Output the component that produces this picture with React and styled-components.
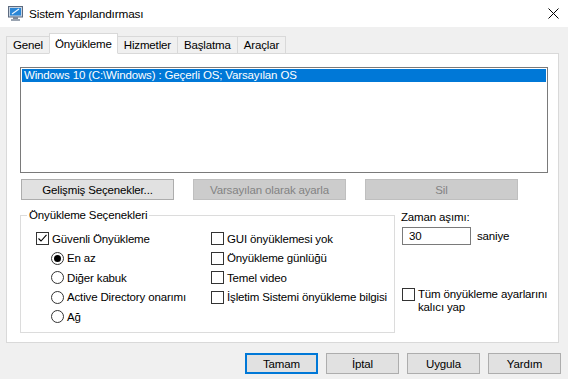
import React from 'react';
import styled, { createGlobalStyle } from 'styled-components';

const Global = createGlobalStyle`
  html, body { margin: 0; padding: 0; background: #f0f0f0; }
  body {
    font-family: "Segoe UI", "Liberation Sans", Arial, sans-serif;
    font-size: 11.5px;
    letter-spacing: -0.15px;
    color: #000;
  }
  * { box-sizing: border-box; }
`;

const Window = styled.div`
  width: 568px;
  height: 379px;
  display: flex;
  flex-direction: column;
  background: #f0f0f0;
  overflow: hidden;
`;

const TitleBar = styled.div`
  height: 27px;
  flex-shrink: 0;
  background: #fff;
  display: flex;
  align-items: center;
  padding-left: 8px;
`;

const Title = styled.span`
  flex: 1;
  margin-left: 6px;
  font-size: 11.8px;
  line-height: 16px;
`;

const CloseBtn = styled.div`
  width: 30px;
  height: 27px;
  display: flex;
  align-items: center;
  justify-content: center;
`;

const Body = styled.div`
  flex: 1;
  display: flex;
  flex-direction: column;
  padding: 6px 9px 0 6px;
`;

const TabStrip = styled.div`
  display: flex;
  align-items: flex-end;
  height: 21px;
  margin-bottom: -1px;
  position: relative;
  z-index: 1;
`;

const Tab = styled.div`
  height: ${p => (p.$active ? '21px' : '18px')};
  padding: 0 ${p => (p.$active ? 5 : 6)}px;
  padding-top: ${p => (p.$active ? '3px' : '0')};
  margin-left: ${p => (p.$first ? '0' : '-1px')};
  border: 1px solid #d9d9d9;
  border-bottom: 1px solid ${p => (p.$active ? '#fff' : '#d9d9d9')};
  background: ${p => (p.$active ? '#fff' : '#f0f0f0')};
  display: flex;
  align-items: ${p => (p.$active ? 'flex-start' : 'center')};
  line-height: 14px;
  position: relative;
  z-index: ${p => (p.$active ? 2 : 1)};
  white-space: nowrap;
`;

const Panel = styled.div`
  height: 290px;
  border: 1px solid #d9d9d9;
  background: #fff;
  display: flex;
  flex-direction: column;
  padding: 13px 10px 9px 13px;
`;

const ListBox = styled.div`
  height: 106px;
  border: 1px solid #7a7a7a;
  padding: 1px;
  flex-shrink: 0;
`;

const ListItem = styled.div`
  height: 13px;
  line-height: 13px;
  padding-left: 2px;
  background: ${p => (p.$selected ? '#0078d7' : 'transparent')};
  color: ${p => (p.$selected ? '#fff' : '#000')};
  white-space: nowrap;
`;

const ButtonRow = styled.div`
  display: flex;
  gap: ${p => p.$gap || 8}px;
  margin-top: ${p => p.$top || 0}px;
  margin-left: ${p => p.$left || 0}px;
  margin-right: ${p => p.$right || 0}px;
  justify-content: ${p => p.$justify || 'flex-start'};
`;

const Button = styled.div`
  width: ${p => p.$width}px;
  height: 21px;
  display: flex;
  align-items: center;
  justify-content: center;
  background: ${p => (p.$disabled ? '#cccccc' : '#e1e1e1')};
  border: ${p => (p.$default ? '2px solid #0078d7' : p.$disabled ? '1px solid #bfbfbf' : '1px solid #adadad')};
  color: ${p => (p.$disabled ? '#838383' : '#000')};
  white-space: nowrap;
`;

const Lower = styled.div`
  flex: 1;
  display: flex;
  margin-top: 8px;
  gap: 6px;
`;

const Group = styled.fieldset`
  width: 375px;
  min-width: 0;
  flex-shrink: 0;
  margin: 0;
  border: 1px solid #dcdcdc;
  padding: 6px 8px 0 15px;
  display: grid;
  grid-template-columns: 175px 1fr;
  align-content: start;
`;

const Legend = styled.legend`
  padding: 0 2px;
  margin-left: -9px;
  line-height: 15px;
`;

const Column = styled.div`
  display: flex;
  flex-direction: column;
`;

const OptRow = styled.label`
  display: flex;
  align-items: center;
  gap: 3px;
  height: 19.5px;
  padding-left: ${p => p.$indent || 0}px;
  white-space: nowrap;
  line-height: 14px;
`;

const Box = styled.span`
  width: 13px;
  height: 13px;
  border: 1px solid #333;
  background: #fff;
  flex-shrink: 0;
  display: flex;
  align-items: center;
  justify-content: center;
`;

const Radio = styled.span`
  width: 13px;
  height: 13px;
  border: 1px solid #333;
  border-radius: 50%;
  background: #fff;
  flex-shrink: 0;
  display: flex;
  align-items: center;
  justify-content: center;
  &::after {
    content: '';
    width: 7px;
    height: 7px;
    border-radius: 50%;
    background: ${p => (p.$on ? '#000' : 'transparent')};
  }
`;

const Side = styled.div`
  flex: 1;
  min-width: 0;
  display: flex;
  flex-direction: column;
`;

const SideLabel = styled.div`
  line-height: 15px;
  margin-top: 2px;
`;

const InputRow = styled.div`
  display: flex;
  align-items: center;
  gap: 6px;
  margin-top: 2px;
  padding-left: 1px;
`;

const Input = styled.div`
  width: 69px;
  height: 18px;
  border: 1px solid #7a7a7a;
  background: #fff;
  padding-left: 6px;
  display: flex;
  align-items: center;
`;

const Persist = styled.label`
  display: flex;
  align-items: flex-start;
  gap: 3px;
  margin-top: 43px;
  padding-left: 1px;
  line-height: 13px;
  white-space: nowrap;
`;

const Footer = styled.div`
  padding-top: 10px;
`;

const Check = () => (
  <svg width="11" height="11" viewBox="0 0 11 11">
    <path d="M1.5 5.5 L4 8 L9.5 1.8" fill="none" stroke="#000" strokeWidth="1.1" />
  </svg>
);

const AppIcon = () => (
  <svg width="15" height="15" viewBox="0 0 15 15">
    <rect x="0.5" y="0.5" width="14" height="10.5" fill="#c8d4e2" stroke="#5d6b80" />
    <rect x="2" y="2" width="11" height="7.5" fill="#2a86d6" />
    <path d="M4 8 L11 3" stroke="#e8f4ff" strokeWidth="1.1" />
    <rect x="5" y="11" width="5" height="2" fill="#7d8897" />
    <rect x="3" y="13" width="9" height="2" fill="#9aa4b1" />
  </svg>
);

const CloseIcon = () => (
  <svg width="11" height="11" viewBox="0 0 11 11">
    <path d="M0.5 0.5 L10.5 10.5 M10.5 0.5 L0.5 10.5" stroke="#000" strokeWidth="1" />
  </svg>
);

const CheckOpt = ({ on, children, indent }) => (
  <OptRow $indent={indent}>
    <Box>{on && <Check />}</Box>
    <span>{children}</span>
  </OptRow>
);

const RadioOpt = ({ on, children, indent }) => (
  <OptRow $indent={indent}>
    <Radio $on={on} />
    <span>{children}</span>
  </OptRow>
);

const tabs = ['Genel', 'Önyükleme', 'Hizmetler', 'Başlatma', 'Araçlar'];

export default function App() {
  return (
    <>
      <Global />
      <Window>
        <TitleBar>
          <AppIcon />
          <Title>Sistem Yapılandırması</Title>
          <CloseBtn><CloseIcon /></CloseBtn>
        </TitleBar>
        <Body>
          <TabStrip>
            {tabs.map((t, i) => (
              <Tab key={t} $first={i === 0} $active={i === 1}>{t}</Tab>
            ))}
          </TabStrip>
          <Panel>
            <ListBox>
              <ListItem $selected>Windows 10 (C:\Windows) : Geçerli OS; Varsayılan OS</ListItem>
            </ListBox>
            <ButtonRow $gap={19} $top={6} $left={1}>
              <Button $width={153}>Gelişmiş Seçenekler...</Button>
              <Button $width={153} $disabled>Varsayılan olarak ayarla</Button>
              <Button $width={153} $disabled>Sil</Button>
            </ButtonRow>
            <Lower>
              <Group>
                <Legend>Önyükleme Seçenekleri</Legend>
                <Column>
                  <CheckOpt on>Güvenli Önyükleme</CheckOpt>
                  <RadioOpt on indent={15}>En az</RadioOpt>
                  <RadioOpt indent={15}>Diğer kabuk</RadioOpt>
                  <RadioOpt indent={15}>Active Directory onarımı</RadioOpt>
                  <RadioOpt indent={15}>Ağ</RadioOpt>
                </Column>
                <Column>
                  <CheckOpt>GUI önyüklemesi yok</CheckOpt>
                  <CheckOpt>Önyükleme günlüğü</CheckOpt>
                  <CheckOpt>Temel video</CheckOpt>
                  <CheckOpt>İşletim Sistemi önyükleme bilgisi</CheckOpt>
                </Column>
              </Group>
              <Side>
                <SideLabel>Zaman aşımı:</SideLabel>
                <InputRow>
                  <Input>30</Input>
                  <span>saniye</span>
                </InputRow>
                <Persist>
                  <Box />
                  <span>Tüm önyükleme ayarlarını<br />kalıcı yap</span>
                </Persist>
              </Side>
            </Lower>
          </Panel>
          <Footer>
            <ButtonRow $gap={8} $justify="flex-end" $right={-2}>
              <Button $width={73} $default>Tamam</Button>
              <Button $width={73}>İptal</Button>
              <Button $width={73}>Uygula</Button>
              <Button $width={73}>Yardım</Button>
            </ButtonRow>
          </Footer>
        </Body>
      </Window>
    </>
  );
}
